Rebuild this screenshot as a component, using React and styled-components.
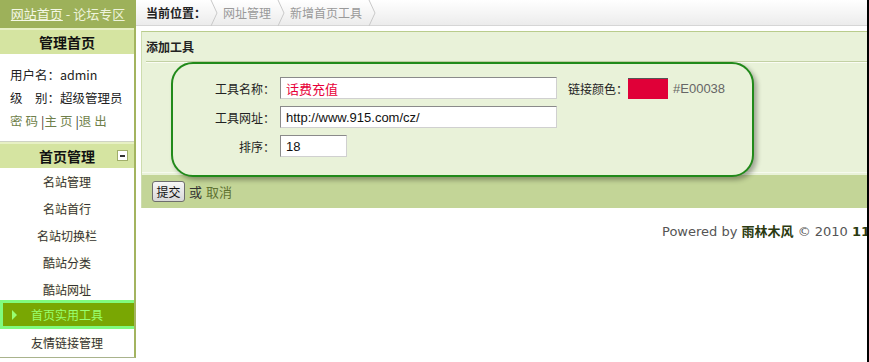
import React from "react";
import styled, { createGlobalStyle } from "styled-components";

const Global = createGlobalStyle`
  html, body { margin: 0; padding: 0; background: #fff; }
  body { font-family: "Noto Sans CJK SC", "Liberation Sans", sans-serif; font-size: 12px; color: #333; }
`;

const Page = styled.div`
  width: 869px;
  height: 362px;
  box-sizing: border-box;
  border-right: 2px solid #000;
  display: flex;
  overflow: hidden;
`;

const Sidebar = styled.aside`
  width: 136px;
  flex: none;
  display: flex;
  flex-direction: column;
`;

const SideTop = styled.div`
  height: 28px;
  background: #9db15a;
  color: #eef4dc;
  font-size: 13px;
  line-height: 28px;
  text-align: center;
  white-space: nowrap;
  a { color: #f4f8e6; text-decoration: underline; }
`;

const SideBody = styled.div`
  border-right: 2px solid #a3b45f;
  border-bottom: 1px solid #a9b38c;
  height: 329px;
  display: flex;
  flex-direction: column;
`;

const SectionHead = styled.div`
  position: relative;
  height: 24px;
  line-height: 24px;
  background: #d5e4a1;
  border-top: 2px solid #e7f0c4;
  ${(p) => (p.$rule ? "box-shadow: 0 -1px 0 #cfd3c4;" : "")}
  font-size: 14px;
  font-weight: bold;
  color: #111;
  text-align: center;
`;

const Collapse = styled.span`
  position: absolute;
  right: 6px;
  top: 6px;
  width: 9px;
  height: 9px;
  background: #fff;
  border: 1px solid #a0ae6a;
  display: flex;
  align-items: center;
  justify-content: center;
  &::after { content: ""; width: 5px; height: 2px; background: #333; }
`;

const UserInfo = styled.div`
  padding: 9px 0 10px 10px;
  font-size: 12.5px;
  line-height: 23px;
  color: #222;
`;

const Links = styled.div`
  color: #6f7f4a;
  letter-spacing: 3px;
  span { color: #333; letter-spacing: 0; }
`;

const Menu = styled.ul`
  list-style: none;
  margin: 0;
  padding: 0;
`;

const Item = styled.li`
  height: 27px;
  line-height: 27px;
  text-align: center;
  font-size: 12px;
  color: #333;
  text-shadow: 0 0 2px #fff6c8;
`;

const ActiveItem = styled.li`
  height: 29px;
  padding: 3px 0 3px 3px;
  box-sizing: border-box;
  background: #80fb7e;
  margin-top: -3px;
`;

const ActiveInner = styled.div`
  height: 23px;
  background: #79a703;
  color: #98ff70;
  display: flex;
  align-items: center;
  font-size: 12px;
  padding-left: 9px;
  gap: 14px;
  &::before {
    content: "";
    border-left: 5px solid #98ff70;
    border-top: 5px solid transparent;
    border-bottom: 5px solid transparent;
  }
`;

const Main = styled.main`
  flex: 1;
  display: flex;
  flex-direction: column;
  min-width: 0;
`;

const Crumbs = styled.nav`
  height: 26px;
  box-sizing: border-box;
  background: linear-gradient(#ffffff, #ececec);
  border-bottom: 1px solid #d6d6d6;
  display: flex;
  align-items: center;
  padding-left: 10px;
  font-size: 12px;
  color: #999;
`;

const Here = styled.span`
  color: #222;
  font-weight: bold;
  margin-right: 4px;
`;

const Crumb = styled.span`
  margin: 0 6px 0 4px;
`;

const Sep = () => (
  <svg width="9" height="26" viewBox="0 0 9 26" style={{ flex: "none" }}>
    <polyline points="1,0 7,13 1,26" fill="none" stroke="#c9c9c9" strokeWidth="1" />
  </svg>
);

const Panel = styled.section`
  margin: 5px 0 0 5px;
  background: #e9f2d9;
  border-top: 1px solid #b9cc8c;
  border-left: 1px solid #cddcae;
`;

const PanelTitle = styled.h2`
  margin: 0;
  height: 29px;
  line-height: 29px;
  padding-left: 4px;
  font-size: 12px;
  font-weight: bold;
  color: #222;
`;

const Rule = styled.div`
  margin-left: 4px;
  border-top: 1px solid #c3d1a4;
  border-bottom: 1px solid #fafcf4;
`;

const FormArea = styled.div`
  padding-left: 29px;
  border-bottom: 1px solid #f6faee;
  margin-bottom: 2px;
`;

const FormBox = styled.div`
  position: relative;
  z-index: 1;
  width: 583px;
  box-sizing: border-box;
  margin: -1px 0 -5px;
  border: 2px solid #218a1a;
  border-radius: 22px;
  background: #e9f2d9;
  box-shadow: 3px 3px 5px rgba(0, 0, 0, 0.32);
  padding: 13px 0 18px;
  display: grid;
  grid-template-columns: 102px auto 1fr;
  column-gap: 5px;
  row-gap: 7px;
  align-items: center;
`;

const Label = styled.label`
  text-align: right;
  font-size: 12px;
  color: #222;
`;

const Input = styled.input`
  width: ${(p) => p.$w}px;
  height: 22px;
  box-sizing: border-box;
  border: 1px solid;
  border-color: #8a8a8a #d0d0d0 #d0d0d0 #8a8a8a;
  padding: 0 5px;
  font-family: ${(p) => (p.$cjk ? `"Noto Sans CJK SC", sans-serif` : `"Liberation Sans", "Noto Sans CJK SC", sans-serif`)};
  font-size: 13px;
  color: ${(p) => p.$color || "#111"};
  background: #fff;
  outline: none;
`;

const ColorField = styled.div`
  display: flex;
  align-items: center;
  margin-left: 6px;
  font-size: 12px;
  color: #222;
`;

const Swatch = styled.span`
  width: 40px;
  height: 21px;
  box-sizing: border-box;
  background: #e00038;
  border-top: 1px solid #555;
  margin: 0 5px 0 0;
`;

const Hex = styled.span`
  font-family: "Liberation Sans", sans-serif;
  font-size: 13px;
  color: #666;
`;

const Bar = styled.div`
  height: 33px;
  background: #c3d597;
  display: flex;
  align-items: center;
  padding-left: 10px;
  gap: 4px;
  font-size: 13px;
  color: #333;
`;

const Button = styled.button`
  height: 21px;
  width: 33px;
  padding: 0;
  border: 1px solid #6e6e6e;
  border-radius: 3px;
  background: linear-gradient(#f6f6f6, #d8d8d8);
  font-family: "Noto Sans CJK SC", sans-serif;
  font-size: 12px;
  color: #111;
`;

const Cancel = styled.a`
  color: #5f7232;
  text-decoration: none;
`;

const Footer = styled.footer`
  margin-top: 14px;
  padding-left: 526px;
  line-height: 20px;
  white-space: nowrap;
  font-family: "DejaVu Sans", "Noto Sans CJK SC", sans-serif;
  font-size: 13px;
  color: #555;
  b { color: #2b3a10; }
`;

export default function App() {
  return (
    <>
      <Global />
      <Page>
        <Sidebar>
          <SideTop>
            <a>网站首页</a> - 论坛专区
          </SideTop>
          <SideBody>
            <SectionHead>管理首页</SectionHead>
            <UserInfo>
              <div>用户名：admin</div>
              <div>级　别：超级管理员</div>
              <Links>
                密码<span>|</span>主页<span>|</span>退出
              </Links>
            </UserInfo>
            <SectionHead $rule>
              首页管理
              <Collapse />
            </SectionHead>
            <Menu>
              <Item>名站管理</Item>
              <Item>名站首行</Item>
              <Item>名站切换栏</Item>
              <Item>酷站分类</Item>
              <Item>酷站网址</Item>
              <ActiveItem>
                <ActiveInner>首页实用工具</ActiveInner>
              </ActiveItem>
              <Item>友情链接管理</Item>
            </Menu>
          </SideBody>
        </Sidebar>
        <Main>
          <Crumbs>
            <Here>当前位置：</Here>
            <Sep />
            <Crumb>网址管理</Crumb>
            <Sep />
            <Crumb>新增首页工具</Crumb>
            <Sep />
          </Crumbs>
          <Panel>
            <PanelTitle>添加工具</PanelTitle>
            <Rule />
            <FormArea>
              <FormBox>
                <Label>工具名称：</Label>
                <Input $w={277} $cjk $color="#e8003a" defaultValue="话费充值" />
                <ColorField>
                  链接颜色：<Swatch />
                  <Hex>#E00038</Hex>
                </ColorField>
                <Label>工具网址：</Label>
                <Input $w={277} defaultValue="http://www.915.com/cz/" />
                <span />
                <Label>排序：</Label>
                <Input $w={67} defaultValue="18" />
                <span />
              </FormBox>
            </FormArea>
            <Bar>
              <Button>提交</Button>
              或 <Cancel>取消</Cancel>
            </Bar>
          </Panel>
          <Footer>
            Powered by <b>雨林木风</b> © 2010 <b>114la.com</b>
          </Footer>
        </Main>
      </Page>
    </>
  );
}
